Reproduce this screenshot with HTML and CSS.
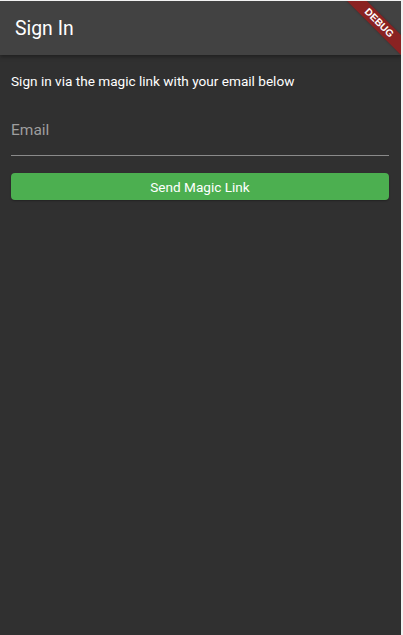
FILE: index.html
```html
<!DOCTYPE html>
<html>
<head>
<meta charset="utf-8">
<link rel="stylesheet" href="styles.css">
</head>
<body>
<div class="app">
  <header class="appbar"><h1 class="title">Sign In</h1></header>
  <main class="content">
    <p class="intro">Sign in via the magic link with your email below</p>
    <label class="field">
      <input class="input" type="email" placeholder="Email">
    </label>
    <button class="btn">Send Magic Link</button>
  </main>
  <div class="banner"><span>DEBUG</span></div>
</div>
</body>
</html>
```
FILE: styles.css
```css
html, body { margin: 0; padding: 0; }
body {
  background: #f2f2f2;
  width: 403px;
  height: 635px;
  overflow: hidden;
  font-family: Roboto, "Liberation Sans", sans-serif;
}
.app {
  position: relative;
  width: 401px;
  height: 634px;
  margin-top: 1px;
  background: #303030;
  overflow: hidden;
  display: flex;
  flex-direction: column;
}
.appbar {
  height: 54px;
  background: #424242;
  box-shadow: 0 2px 4px rgba(0,0,0,0.35);
  display: flex;
  align-items: center;
  padding-left: 15px;
  position: relative;
  z-index: 1;
}
.title {
  margin: 0;
  font-size: 19.4px;
  font-weight: 400;
  color: #fff;
}
.content {
  padding: 0 12px 0 11px;
  display: flex;
  flex-direction: column;
}
.intro {
  margin: 17px 0 0;
  font-size: 13.6px;
  line-height: 18px;
  color: #fff;
}
.field {
  display: block;
  margin-top: 22px;
  border-bottom: 1px solid #8a8a8a;
}
.input {
  display: block;
  width: 100%;
  box-sizing: border-box;
  background: transparent;
  border: 0;
  outline: none;
  padding: 9px 0 15px;
  font-family: inherit;
  font-size: 15.5px;
  line-height: 19px;
  color: #fff;
}
.input::placeholder { color: #9e9e9e; opacity: 1; }
.btn {
  margin-top: 17px;
  height: 27px;
  border: 0;
  border-radius: 4px;
  background: #4caf50;
  color: #fff;
  font-family: inherit;
  font-size: 13.6px;
  padding: 0;
  box-shadow: 0 1px 2px rgba(0,0,0,0.3);
}
.banner {
  position: absolute;
  left: 319px;
  top: 15px;
  width: 120px;
  height: 14px;
  background: #8a2222;
  transform: rotate(45deg);
  display: flex;
  align-items: center;
  justify-content: center;
  z-index: 2;
  box-shadow: 0 0 2px rgba(0,0,0,0.3);
}
.banner span {
  color: #fff;
  font-family: "Liberation Sans", sans-serif;
  font-weight: 700;
  font-size: 10px;
  line-height: 1;
}
```
